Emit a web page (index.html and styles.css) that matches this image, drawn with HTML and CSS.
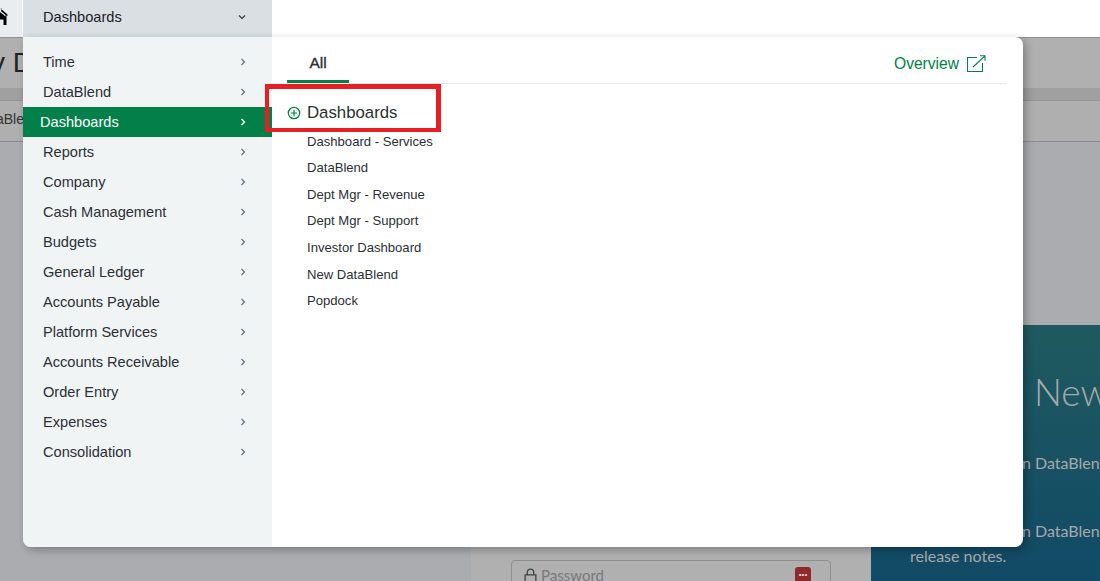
FILE: index.html
```html
<!DOCTYPE html>
<html lang="en">
<head>
<meta charset="utf-8">
<title>Dashboards menu</title>
<link rel="stylesheet" href="styles.css">
</head>
<body>
<header class="topbar">
  <div class="home-tab">
    <svg class="home-icon" viewBox="0 0 8 17" width="8" height="17"><path d="M0 0 7.500 6.500V8L6.500 7.300V17H3.500V11.500H0V4.500L2 1z" fill="#000"/><path d="M0 2.200 5.500 7V8.500L0 4z" fill="#e9edef"/></svg>
  </div>
  <div class="module-tab">
    <span>Dashboards</span>
    <svg class="chev" viewBox="0 0 8 6" width="8" height="6"><path d="M1 1.500 4 4.500 7 1.500" class="chev-line-dark"/></svg>
  </div>
</header>

<main class="page">
  <div class="title-band"><span class="page-title">y D</span></div>
  <div class="dark-band"></div>
  <div class="crumb-band"><span class="crumb">aBlend</span></div>
  <div class="login-area">
    <div class="login-card">
      <div class="password">
        <svg class="lock" viewBox="0 0 12 14" width="13" height="15"><path d="M3 6V4a3 3 0 0 1 6 0v2M1 6.500h10v7H1z" fill="none" stroke="#3f4144" stroke-width="1.200"/></svg>
        <span class="pw-text">Password</span>
        <span class="pw-badge">•••</span>
      </div>
    </div>
    <aside class="news">
      <div class="news-title">New</div>
      <p class="news-line first">n DataBlend</p>
      <p class="news-line">n DataBlend</p>
      <p class="news-notes">release notes.</p>
    </aside>
  </div>
</main>

<div class="menu">
  <nav class="side">
    <a class="side-item">Time<svg class="chev" viewBox="0 0 6 8" width="6" height="8"><path d="M1.500 1 4.500 4 1.500 7"/></svg></a>
    <a class="side-item">DataBlend<svg class="chev" viewBox="0 0 6 8" width="6" height="8"><path d="M1.500 1 4.500 4 1.500 7"/></svg></a>
    <a class="side-item active">Dashboards<svg class="chev" viewBox="0 0 6 8" width="6" height="8"><path d="M1.500 1 4.500 4 1.500 7"/></svg></a>
    <a class="side-item">Reports<svg class="chev" viewBox="0 0 6 8" width="6" height="8"><path d="M1.500 1 4.500 4 1.500 7"/></svg></a>
    <a class="side-item">Company<svg class="chev" viewBox="0 0 6 8" width="6" height="8"><path d="M1.500 1 4.500 4 1.500 7"/></svg></a>
    <a class="side-item">Cash Management<svg class="chev" viewBox="0 0 6 8" width="6" height="8"><path d="M1.500 1 4.500 4 1.500 7"/></svg></a>
    <a class="side-item">Budgets<svg class="chev" viewBox="0 0 6 8" width="6" height="8"><path d="M1.500 1 4.500 4 1.500 7"/></svg></a>
    <a class="side-item">General Ledger<svg class="chev" viewBox="0 0 6 8" width="6" height="8"><path d="M1.500 1 4.500 4 1.500 7"/></svg></a>
    <a class="side-item">Accounts Payable<svg class="chev" viewBox="0 0 6 8" width="6" height="8"><path d="M1.500 1 4.500 4 1.500 7"/></svg></a>
    <a class="side-item">Platform Services<svg class="chev" viewBox="0 0 6 8" width="6" height="8"><path d="M1.500 1 4.500 4 1.500 7"/></svg></a>
    <a class="side-item">Accounts Receivable<svg class="chev" viewBox="0 0 6 8" width="6" height="8"><path d="M1.500 1 4.500 4 1.500 7"/></svg></a>
    <a class="side-item">Order Entry<svg class="chev" viewBox="0 0 6 8" width="6" height="8"><path d="M1.500 1 4.500 4 1.500 7"/></svg></a>
    <a class="side-item">Expenses<svg class="chev" viewBox="0 0 6 8" width="6" height="8"><path d="M1.500 1 4.500 4 1.500 7"/></svg></a>
    <a class="side-item">Consolidation<svg class="chev" viewBox="0 0 6 8" width="6" height="8"><path d="M1.500 1 4.500 4 1.500 7"/></svg></a>
  </nav>
  <section class="content">
    <div class="tabs">
      <span class="tab">All</span>
      <a class="overview">Overview
        <svg viewBox="0 0 19 18" width="19" height="18" class="ext"><path d="M10 2.500H.5v14h15V8M6 12 18 .8M13 .8h5v5" fill="none" stroke="#03804a" stroke-width="1.100"/></svg>
      </a>
    </div>
    <div class="group-head">
      <svg viewBox="0 0 14 14" width="14" height="14" class="plus"><circle cx="7" cy="7" r="5.700" fill="none" stroke="#03804a" stroke-width="1.300"/><path d="M7 3.800v6.400M3.800 7h6.400" stroke="#03804a" stroke-width="1.200"/></svg>
      <span>Dashboards</span>
    </div>
    <ul class="links">
      <li>Dashboard - Services</li>
      <li>DataBlend</li>
      <li>Dept Mgr - Revenue</li>
      <li>Dept Mgr - Support</li>
      <li>Investor Dashboard</li>
      <li>New DataBlend</li>
      <li>Popdock</li>
    </ul>
    <div class="highlight"></div>
  </section>
</div>
</body>
</html>
```
FILE: styles.css
```css
* { box-sizing: border-box; }
html, body { margin: 0; height: 100%; }
body {
  width: 1100px;
  height: 581px;
  overflow: hidden;
  position: relative;
  background: #abacaf;
  font-family: "Liberation Sans", Arial, sans-serif;
  color: #2b2f36;
}
.topbar { display: flex; height: 37px; background: #fff; }
.home-tab {
  width: 23px;
  background: #e9edef;
  border-right: 1px solid #fff;
  padding-top: 8px;
  overflow: hidden;
}
.home-icon { display: block; }
.module-tab {
  width: 249px;
  background: #d9dfe2;
  display: flex;
  align-items: center;
  justify-content: space-between;
  padding: 0 26px 3px 20px;
  font-size: 14.600px;
  color: #1d2127;
}
.chev { fill: none; stroke: #5d6a78; stroke-width: 1.100; flex: none; }
.chev-line-dark { stroke: #333; }

.page { height: 544px; }
.title-band {
  height: 51px;
  background: #b0b0b0;
  border-top: 1px solid #8f8f8f;
  padding-top: 9px;
  overflow: hidden;
  white-space: nowrap;
}
.page-title { display: block; font-size: 28px; line-height: 32px; color: #222; margin-left: -9px; }
.dark-band { height: 12px; background: #a0a0a0; }
.crumb-band {
  height: 42px;
  background: #aeafae;
  border-top: 1px solid #949494;
  border-bottom: 1px solid #8c8c8c;
  font-size: 14px;
  line-height: 36px;
  overflow: hidden;
  white-space: nowrap;
}
.crumb { margin-left: -4px; color: #333; }
.login-area { display: flex; height: 439px; padding-left: 471px; }
.login-card {
  width: 400px;
  background: #b0b0b0;
  padding: 418px 40px 0;
}
.password {
  position: relative;
  height: 40px;
  border: 1px solid #8f8f8f;
  border-radius: 4px;
  display: flex;
  align-items: flex-start;
  padding: 5px 12px;
  gap: 4px;
}
.pw-text { font-family: Lato, sans-serif; font-size: 15px; color: #77797c; line-height: 18px; }
.lock { margin-top: 2px; flex: none; }
.pw-badge {
  margin: 1px 7px 0 auto;
  width: 16px;
  height: 30px;
  background: #8f2a2a;
  border-radius: 3px;
  color: #ddd;
  font-size: 8px;
  line-height: 16px;
  text-align: center;
  overflow: hidden;
}
.news {
  width: 229px;
  margin-top: 183px;
  height: 256px;
  background: linear-gradient(#1f5a5f, #114a66);
  font-family: Lato, sans-serif;
  color: #a9a9ab;
  overflow: hidden;
  white-space: nowrap;
  padding-left: 39px;
}
.news-title { font-size: 37px; font-weight: 300; line-height: 44px; margin: 45px 0 0 124px; }
.news-line { font-size: 16px; line-height: 20px; margin: 0 0 0 112px; }
.news-line.first { margin-top: 39px; margin-bottom: 48px; }
.news-notes { font-size: 16px; line-height: 20px; margin: 5px 0 0; }

.menu {
  position: absolute;
  left: 23px;
  top: 37px;
  width: 1000px;
  height: 510px;
  display: flex;
  background: #fff;
  border-radius: 0 8px 8px 8px;
  box-shadow: 3px 3px 8px rgba(0, 0, 0, .28);
  overflow: hidden;
}
.side { width: 249px; background: #f0f4f5; padding-top: 10px; flex: none; }
.side-item {
  height: 30px;
  display: flex;
  align-items: center;
  justify-content: space-between;
  padding: 0 26px 0 20px;
  font-size: 14.600px;
  color: #2b2f36;
}
.side-item.active {
  background: #03804a;
  color: #fff;
  padding-left: 17px;
}
.side-item.active .chev { stroke: #fff; stroke-width: 1.400; }
.content { flex: 1; position: relative; padding: 0 16px 0 15px; }
.tabs {
  height: 47px;
  display: flex;
  justify-content: space-between;
  border-bottom: 1px solid #e8e9ea;
}
.tab {
  width: 62px;
  height: 46px;
  border-bottom: 3px solid #03804a;
  text-align: center;
  font-size: 15.500px;
  -webkit-text-stroke: .35px #2b2f36;
  line-height: 51px;
  color: #2b2f36;
}
.overview {
  display: flex;
  align-items: flex-start;
  gap: 8px;
  padding: 18px 21px 0 0;
  font-size: 15.600px;
  line-height: 18px;
  color: #03804a;
}
.group-head {
  display: flex;
  align-items: center;
  gap: 6px;
  margin-top: 19px;
  height: 20px;
  font-size: 16.800px;
  color: #2b2f36;
}
.plus { flex: none; }
.links { list-style: none; margin: 9.800px 0 0 20px; padding: 0; }
.links li { height: 26.550px; font-size: 13.100px; line-height: 17px; color: #2b2f36; }
.highlight {
  position: absolute;
  left: -7px;
  top: 47px;
  width: 176px;
  height: 48px;
  border: 5px solid #e81e25;
  border-left-width: 4px;
  border-bottom-width: 4px;
}
```
